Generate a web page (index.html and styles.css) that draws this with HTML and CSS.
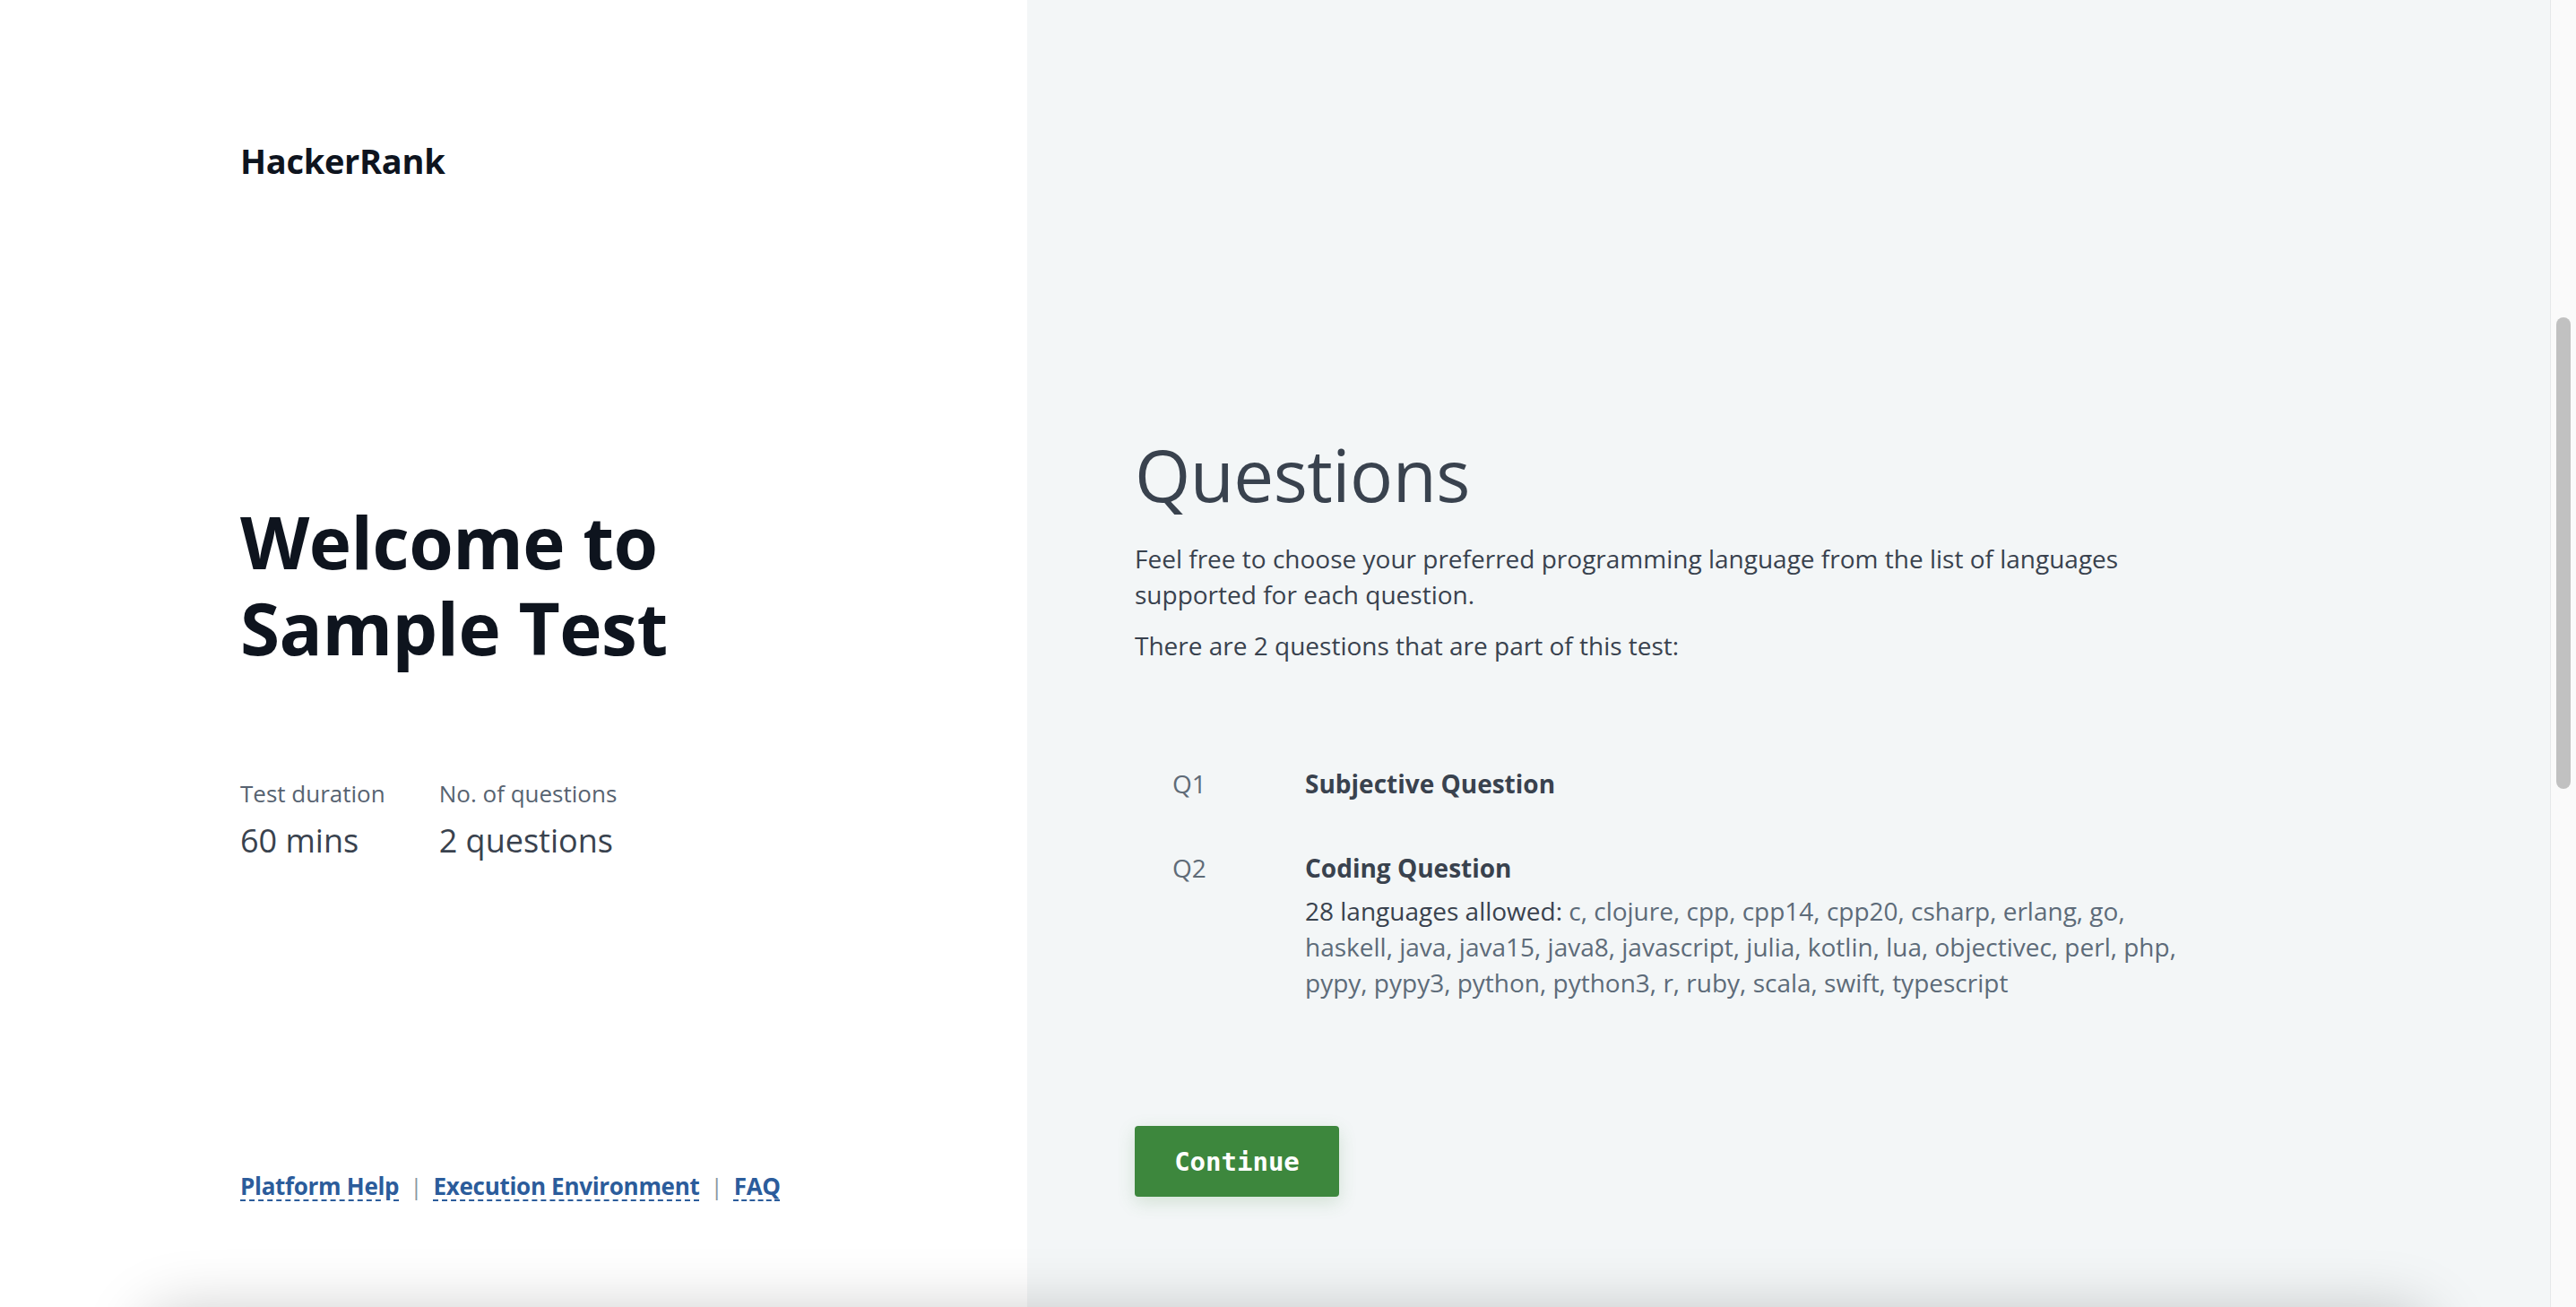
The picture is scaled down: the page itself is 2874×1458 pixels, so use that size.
FILE: index.html
```html
<!DOCTYPE html>
<html lang="en">
<head>
<meta charset="utf-8">
<title>Welcome to Sample Test</title>
<link rel="stylesheet" href="styles.css">
</head>
<body>
<div class="page">
  <aside class="intro">
    <div class="logo">HackerRank</div>
    <h1 class="title">Welcome to<br>Sample Test</h1>
    <div class="stats">
      <div class="stat">
        <div class="stat-label">Test duration</div>
        <div class="stat-value">60 mins</div>
      </div>
      <div class="stat">
        <div class="stat-label">No. of questions</div>
        <div class="stat-value">2 questions</div>
      </div>
    </div>
    <div class="links">
      <a class="link" href="#">Platform Help</a>
      <span class="sep">|</span>
      <a class="link" href="#">Execution Environment</a>
      <span class="sep">|</span>
      <a class="link" href="#">FAQ</a>
    </div>
  </aside>
  <main class="questions">
    <div class="content">
      <h2 class="heading">Questions</h2>
      <p class="para">Feel free to choose your preferred programming language from the list of languages supported for each question.</p>
      <p class="para">There are 2 questions that are part of this test:</p>
      <ol class="qlist">
        <li class="qitem">
          <span class="qnum">Q1</span>
          <div class="qbody">
            <div class="qtitle">Subjective Question</div>
          </div>
        </li>
        <li class="qitem">
          <span class="qnum">Q2</span>
          <div class="qbody">
            <div class="qtitle">Coding Question</div>
            <p class="qlangs"><strong class="qlangs-label">28 languages allowed:</strong> c, clojure, cpp, cpp14, cpp20, csharp, erlang, go, haskell, java, java15, java8, javascript, julia, kotlin, lua, objectivec, perl, php, pypy, pypy3, python, python3, r, ruby, scala, swift, typescript</p>
          </div>
        </li>
      </ol>
      <button class="btn" type="button">Continue</button>
    </div>
  </main>
  <div class="scrollbar"><div class="thumb"></div></div>
</div>
<div class="dock"></div>
</body>
</html>
```
FILE: styles.css
```css
* { box-sizing: border-box; }
html, body {
  margin: 0;
  padding: 0;
  height: 100%;
  overflow: hidden;
}
body {
  font-family: "Open Sans", "Noto Sans", sans-serif;
  color: #39424e;
  background: #ffffff;
}
.page {
  display: flex;
  height: 1458px;
}
.intro {
  width: 1146px;
  flex: none;
  background: #ffffff;
  padding: 155px 0 0 268px;
  display: flex;
  flex-direction: column;
}
.logo {
  font-size: 38px;
  line-height: 48px;
  font-weight: 700;
  color: #0e141e;
  letter-spacing: -0.3px;
}
.title {
  margin: 353px 0 0;
  font-size: 80px;
  line-height: 96px;
  font-weight: 700;
  color: #0e141e;
  letter-spacing: -0.5px;
}
.stats {
  display: flex;
  gap: 60px;
  margin-top: 119px;
}
.stat-label {
  font-size: 26px;
  line-height: 36px;
  color: #576371;
}
.stat-value {
  margin-top: 11px;
  font-size: 36px;
  line-height: 48px;
  color: #39424e;
}
.links {
  margin-top: 343px;
  font-size: 26px;
  line-height: 36px;
  font-weight: 700;
  display: flex;
  gap: 12px;
  align-items: baseline;
}
.link {
  color: #2b5c9b;
  text-decoration: underline dashed;
  text-decoration-thickness: 2px;
  text-underline-offset: 5px;
  letter-spacing: -0.3px;
}
.sep {
  color: #8b97a2;
  font-weight: 400;
}
.questions {
  flex: 1;
  background: #f3f6f7;
  padding: 479px 0 0 120px;
}
.content {
  width: 1200px;
}
.heading {
  margin: 0;
  font-size: 80px;
  line-height: 100px;
  font-weight: 400;
  color: #39424e;
  letter-spacing: -0.5px;
}
.para {
  margin: 24px 0 0;
  font-size: 28px;
  line-height: 40px;
  color: #39424e;
}
.para + .para {
  margin-top: 17px;
}
.qlist {
  list-style: none;
  margin: 114px 0 0;
  padding: 0 0 0 42px;
}
.qitem {
  display: flex;
  font-size: 28px;
  line-height: 40px;
  margin-bottom: 54px;
}
.qitem:last-child { margin-bottom: 0; }
.qnum {
  width: 148px;
  flex: none;
  color: #5f6b77;
}
.qtitle {
  font-weight: 700;
  color: #39424e;
}
.qlangs {
  margin: 8px 0 0;
  color: #5d6b79;
}
.qlangs-label {
  font-weight: 400;
  color: #39424e;
}
.btn {
  margin-top: 140px;
  width: 228px;
  height: 79px;
  border: none;
  border-radius: 4px;
  background: #3d873d;
  color: #ffffff;
  font-family: "DejaVu Sans Mono", "Liberation Mono", monospace;
  font-weight: 700;
  font-size: 29px;
  box-shadow: 0 6px 20px rgba(61, 135, 61, 0.18);
  cursor: pointer;
}
.scrollbar {
  width: 29px;
  flex: none;
  background: #fafafa;
  border-left: 1px solid #e6e8e9;
  padding: 354px 0 0 6px;
}
.thumb {
  width: 16px;
  height: 526px;
  border-radius: 8px;
  background: #c1c1c1;
}
.dock {
  position: fixed;
  left: 160px;
  right: 160px;
  top: 1470px;
  height: 80px;
  border-radius: 40px;
  background: #ffffff;
  box-shadow: 0 -6px 70px rgba(0, 0, 0, 0.22);
}
```
